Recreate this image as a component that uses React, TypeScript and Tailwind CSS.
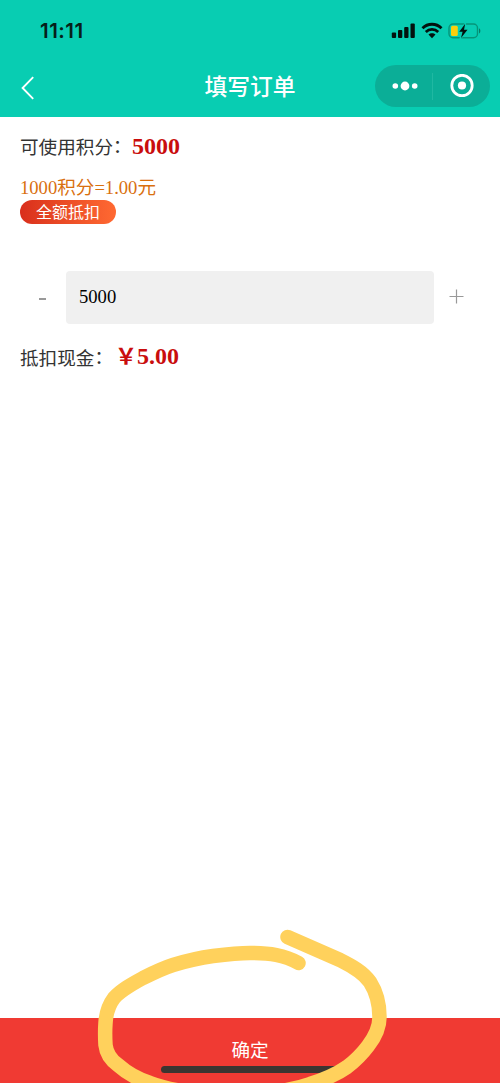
import { useState } from 'react';

const POINTS_PER_YUAN = 1000;
const AVAILABLE_POINTS = 5000;

function StatusBar() {
  return (
    <div className="flex h-[54px] items-start justify-between pt-[19px] pr-[19px] pl-[40px]">
      <span className="font-[Inter,sans-serif] text-[20.5px] leading-[24px] font-semibold tracking-[0.5px] text-[#06201a]">
        11:11
      </span>
      <svg width="90" height="24" viewBox="0 0 90 24" fill="none">
        {/* signal */}
        <g fill="#03120e">
          <rect x="0.8" y="13.5" width="4.3" height="5.5" rx="1" />
          <rect x="7" y="11" width="4.3" height="8" rx="1" />
          <rect x="13.2" y="8" width="4.3" height="11" rx="1" />
          <rect x="19.5" y="4.5" width="4.3" height="14.5" rx="1" />
        </g>
        {/* wifi */}
        <g stroke="#03120e" strokeWidth="2.8">
          <path d="M31.5 9.3C36.8 3.9 45.2 3.9 50.5 9.3" />
          <path d="M34.8 12.9C38.3 9.5 43.7 9.5 47.2 12.9" />
        </g>
        <path d="M37.5 15.6C39.4 13.8 42.6 13.8 44.5 15.6L41 19.2Z" fill="#03120e" />
        {/* battery */}
        <rect x="58" y="5" width="28.5" height="13.8" rx="4" stroke="#069579" strokeWidth="1.4" />
        <path d="M88 9.3C89.8 10 89.8 13.8 88 14.5Z" fill="#087c66" />
        <rect x="60" y="6.8" width="6.8" height="10.2" rx="1.5" fill="#fccf0c" />
        {/* gap in the outline around the bolt */}
        <path d="M74.3 4.5L68.6 12.7H71L69.4 19.3L77.6 10.7H74Z" stroke="#08cdb2" strokeWidth="1.6" />
        <path d="M74.2 4.8L68.2 12.7H71.6L70 19L76.5 10.7H73Z" fill="#03120e" />
      </svg>
    </div>
  );
}

function NavBar() {
  return (
    <div className="grid h-[64px] grid-cols-[1fr_auto_1fr] items-center px-[10px]">
      <button aria-label="返回" className="mt-[4px] ml-[10px] w-fit">
        <svg width="16" height="24" viewBox="0 0 16 24" fill="none">
          <path d="M13.2 1.2L2.6 12L13.2 22.8" stroke="white" strokeWidth="1.9" />
        </svg>
      </button>
      <h1 className="mt-[4px] text-[22.8px] leading-[32px] font-medium text-white">填写订单</h1>
      <div className="flex h-[42px] w-[115px] items-center justify-self-end rounded-full bg-[#0bae97]">
        <button aria-label="更多" className="flex w-[57px] justify-center pl-[3px]">
          <svg width="28" height="12" viewBox="0 0 28 12" fill="white">
            <circle cx="4.3" cy="6" r="2.8" />
            <circle cx="14" cy="6" r="4.4" />
            <circle cx="23.7" cy="6" r="2.8" />
          </svg>
        </button>
        <span className="h-[27px] w-px bg-[#20b8a2]" />
        <button aria-label="关闭" className="flex w-[57px] justify-center">
          <svg width="24" height="24" viewBox="0 0 24 24" fill="none">
            <circle cx="12" cy="11.5" r="10.2" stroke="white" strokeWidth="2.8" />
            <circle cx="12" cy="11.5" r="4.1" fill="white" />
          </svg>
        </button>
      </div>
    </div>
  );
}

function Colon() {
  return <span className="font-['Noto_Sans_CJK_TC',sans-serif] [font-feature-settings:'halt']">：</span>;
}

export default function App() {
  const [points, setPoints] = useState(AVAILABLE_POINTS);
  const cash = (points / POINTS_PER_YUAN).toFixed(2);

  const changePoints = (value: number) => {
    setPoints(Math.min(AVAILABLE_POINTS, Math.max(0, value || 0)));
  };

  return (
    <div className="relative flex h-[1083px] w-[500px] flex-col overflow-hidden bg-white font-['Liberation_Serif','Noto_Sans_CJK_SC',serif]">
      <header className="h-[117px] shrink-0 bg-[#08cdb2]">
        <StatusBar />
        <NavBar />
      </header>

      <main className="flex-1 px-[20px] pt-[13px]">
        <div className="flex h-[32px] items-center text-[18.6px] text-[#333]">
          <span className="w-[112px] pt-[2px] whitespace-nowrap">
            可使用积分
            <Colon />
          </span>
          <b className="text-[24px] text-[#c90d0d]">{AVAILABLE_POINTS}</b>
        </div>
        <p className="mt-[13px] h-[25px] text-[18.6px] leading-[26px] text-[#d9700f]">1000积分=1.00元</p>
        <button
          onClick={() => changePoints(AVAILABLE_POINTS)}
          className="flex h-[24px] w-[96px] items-center justify-center rounded-full bg-linear-to-r from-[#d92e1c] to-[#ff6932] pt-[2px] text-[16px] leading-none text-white"
        >
          全额抵扣
        </button>

        <div className="mt-[47px] flex h-[53px] items-center">
          <button
            onClick={() => changePoints(points - 100)}
            aria-label="减少"
            className="flex w-[46px] justify-center pr-[1px]"
          >
            <span className="mt-[3px] h-[2px] w-[7px] bg-[#999]" />
          </button>
          <input
            value={points}
            onChange={(e) => changePoints(Number(e.target.value))}
            className="h-full w-[368px] rounded-[4px] bg-[#f0f0f0] px-[13px] pb-[2px] text-[18.6px] text-black outline-none"
          />
          <button
            onClick={() => changePoints(points + 100)}
            aria-label="增加"
            className="flex w-[46px] justify-center pr-[2px] pb-[2px]"
          >
            <svg width="15" height="15" viewBox="0 0 15 15" stroke="#999" strokeWidth="1.2">
              <path d="M0.5 7.5H14.5M7.5 0.5V14.5" />
            </svg>
          </button>
        </div>

        <div className="mt-[16px] flex h-[32px] items-center text-[18.6px] text-[#333]">
          <span className="w-[95px] pt-[3px] whitespace-nowrap">
            抵扣现金
            <Colon />
          </span>
          <b className="flex items-baseline text-[24px] text-[#c90d0d]">
            <span className="w-[22px] text-[22px]">￥</span>
            {cash}
          </b>
        </div>
      </main>

      <footer className="flex h-[65px] shrink-0 flex-col items-center bg-[#f03a33]">
        <button className="mt-[19px] h-[28px] text-[18.6px] leading-[28px] text-white">确定</button>
        <span className="mt-[0.5px] h-[7px] w-[178px] rounded-full bg-[#3b3531]" />
      </footer>

      {/* marker circle drawn over the confirm button */}
      <svg
        className="pointer-events-none absolute bottom-0 left-0"
        width="500"
        height="163"
        viewBox="0 0 500 163"
        fill="none"
      >
        <path
          d="M298.5 43C284 35 270 33 250 33C238 33 225 34.500 213 36C198 38 186 41 173 45C162 48.500 153 53 143 58C132 64 121 70 114 78C108 86 106 94 105.500 103C105 110 105 117 105.500 125C106.500 134 111 140 118 145C127 153 137 159 150 163C190 178 270 178 310 164C323 160 337 154 347 147C355 141 362 134 368 126C375 117 379.500 108 379.500 97C379.500 85 377 73 370 62C363 52 352 46 340 40L287.500 17"
          stroke="#ffd15c"
          strokeWidth="14.5"
          strokeLinecap="round"
          strokeLinejoin="round"
        />
      </svg>
    </div>
  );
}
